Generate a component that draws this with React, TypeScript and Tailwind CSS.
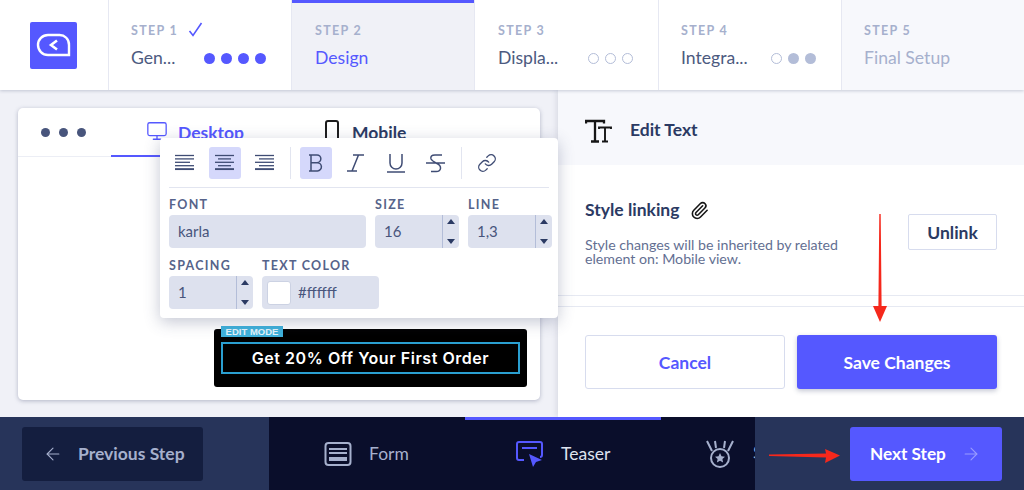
import React from "react";
import { Monitor, Paperclip, Link as LinkIcon, ArrowLeft, ArrowRight } from "lucide-react";

const Dot = ({ kind }: { kind: "blue" | "gray" | "empty" }) => (
  <span
    className={
      kind === "blue"
        ? "w-[11px] h-[11px] rounded-full bg-[#5558ff]"
        : kind === "gray"
        ? "w-[11px] h-[11px] rounded-full bg-[#b3bdd8]"
        : "w-[11px] h-[11px] rounded-full border border-[#b3bdd8]"
    }
  />
);

function Step({
  n, title, dots, cls, titleCls, check, w,
}: {
  n: number; title: string; dots?: ("blue" | "gray" | "empty")[]; cls: string; titleCls: string; check?: boolean; w: string;
}) {
  return (
    <div className={`${w} h-[90px] pr-[25px] pt-[23px] ${cls}`}>
      <div className="flex items-center h-4 text-[12.5px] font-bold tracking-[1.3px] text-[#a6b0cd]">
        STEP {n}
        {check && (
          <svg className="ml-[10px] -mt-[3px]" width="15" height="15" viewBox="0 0 15 15" fill="none">
            <path d="M1.5 9 L5 13.5 L13.5 1" stroke="#5558ff" strokeWidth="1.6" />
          </svg>
        )}
      </div>
      <div className="flex items-center justify-between mt-[7px] h-6">
        <span className={`text-[17.6px] ${titleCls}`}>{title}</span>
        {dots && (
          <span className="flex gap-[6px]">
            {dots.map((d, i) => <Dot key={i} kind={d} />)}
          </span>
        )}
      </div>
    </div>
  );
}

const Bars = ({ lines }: { lines: [number, number][] }) => (
  <svg width="20" height="18" viewBox="0 0 20 18" fill="none" stroke="#3f4c74">
    {lines.map(([a, b], i) => <path key={i} d={`M${a} ${1.5 + i * 3.4} H${b}`} strokeWidth={i === lines.length - 1 ? 1.9 : 1.3} />)}
  </svg>
);

const ToolBtn = ({ active, children }: { active?: boolean; children: React.ReactNode }) => (
  <div className={`w-8 h-8 rounded-[3px] flex items-center justify-center ${active ? "bg-[#d5d8fb]" : ""}`}>{children}</div>
);

const Label = ({ children }: { children: React.ReactNode }) => (
  <div className="text-[12.5px] leading-[14px] font-bold tracking-[1.3px] text-[#56638a]">{children}</div>
);

const Spin = ({ value, w }: { value: string; w: string }) => (
  <div className={`${w} h-[33px] rounded-[4px] bg-[#dde1ee] flex text-[15px] text-[#48557c]`}>
    <div className="flex-1 flex items-center pl-[9px]">{value}</div>
    <div className="w-[17px] border-l border-[#b3bdd8] flex flex-col items-center justify-between py-[4px]">
      <span className="w-0 h-0 border-x-[4px] border-x-transparent border-b-[5px] border-b-[#2b3a63]" />
      <span className="w-0 h-0 border-x-[4px] border-x-transparent border-t-[5px] border-t-[#2b3a63]" />
    </div>
  </div>
);

export default function App() {
  return (
    <div className="relative w-[1024px] h-[490px] overflow-hidden bg-[#f0f1f7] font-['Lato','Noto_Sans',sans-serif]">
      {/* Steps header */}
      <div className="flex h-[90px] shadow-[0_1px_3px_rgba(60,70,110,0.25)] relative gap-[1px] bg-[#e6e8f2]">
        <div className="w-[108px] bg-white flex items-center justify-center">
          <div className="w-[47px] h-[47px] rounded-[2px] bg-[#5558ff] flex items-center justify-center mr-[1px]">
            <svg width="35" height="24" viewBox="0 0 35 24" fill="none">
              <path d="M12 2 H23 A9.5 9.5 0 0 1 33 12 V22 H12 A10 10 0 0 1 12 2 Z" stroke="#fff" strokeWidth="2.4" />
              <path d="M21 7.5 L15 12 L21 16.5" stroke="#fff" strokeWidth="2.6" />
            </svg>
          </div>
        </div>
        <Step w="w-[182px] pl-[22px]" n={1} title="Gen..." check titleCls="text-[#4c5a80]" cls="bg-white" dots={["blue", "blue", "blue", "blue"]} />
        <div className="relative">
          <div className="absolute top-0 left-0 right-0 h-[3px] bg-[#5558ff]" />
          <Step w="w-[182px] pl-[23px]" n={2} title="Design" titleCls="text-[#5558ff]" cls="bg-[#f0f1f7]" />
        </div>
        <Step w="w-[183px] pl-[23px]" n={3} title="Displa..." titleCls="text-[#4c5a80]" cls="bg-white" dots={["empty", "empty", "empty"]} />
        <Step w="w-[182px] pl-[22px]" n={4} title="Integra..." titleCls="text-[#4c5a80]" cls="bg-white" dots={["empty", "gray", "gray"]} />
        <Step w="flex-1 pl-[22px]" n={5} title="Final Setup" titleCls="text-[#a6b0cd]" cls="bg-[#f7f8fc]" />
      </div>

      {/* Body */}
      <div className="flex h-[327px]">
        <div className="relative w-[558px] pt-[18px] pl-[18px] pr-[18px]">
          <div className="relative h-[292px] bg-white rounded-[5px] shadow-[0_1px_4px_rgba(60,70,110,0.35)]">
            <div className="flex h-[49px] border-b border-[#eceef5]">
              <div className="w-[93px] flex items-center pl-[23px] gap-[9px]">
                <span className="w-[9px] h-[9px] rounded-full bg-[#48557c]" />
                <span className="w-[9px] h-[9px] rounded-full bg-[#48557c]" />
                <span className="w-[9px] h-[9px] rounded-full bg-[#48557c]" />
              </div>
              <div className="w-[160px] h-[49px] border-b-2 border-[#5558ff] flex items-center pl-[35px] gap-[10px]">
                <Monitor size={22} strokeWidth={1.4} className="text-[#5558ff] -mt-[1px]" />
                <span className="text-[17.5px] font-bold text-[#5558ff] mt-[3px]">Desktop</span>
              </div>
              <div className="flex items-center pl-[54px] gap-[13px]">
                <span className="w-[14px] h-[22px] rounded-[3px] border-2 border-[#1c1c1c] -mt-[2px]" />
                <span className="text-[17.5px] font-bold text-[#2b3a63] mt-[3px]">Mobile</span>
              </div>
            </div>
            <div className="flex justify-end pr-[13px] pt-[172px]">
              <div className="relative w-[313px] h-[58px] bg-black rounded-[3px] p-[7px] pt-[13px]">
                <div className="absolute left-[7px] -top-[3px] w-[62px] h-[11px] text-center bg-[#3fb2dc] text-[#e4f5fb] text-[9.5px] leading-[11px] font-bold font-['Liberation_Sans',sans-serif]">
                  EDIT MODE
                </div>
                <div className="h-[32px] border-2 border-[#2a9fd0] flex items-center justify-center text-white text-[16px] font-semibold tracking-[0.55px] font-['Inter',sans-serif]">
                  Get 20% Off Your First Order
                </div>
              </div>
            </div>
          </div>

          {/* Formatting popup */}
          <div className="absolute z-10 left-[160px] top-[48px] w-[398px] h-[180px] bg-white rounded-[4px] shadow-[0_4px_16px_rgba(60,70,110,0.3)] px-[9px] pt-[9px]">
            <div className="flex items-center gap-2 h-8">
              <ToolBtn><Bars lines={[[0, 19], [0, 19], [0, 15], [0, 19], [0, 19]]} /></ToolBtn>
              <ToolBtn active><Bars lines={[[0, 19], [3, 16], [0, 19], [3, 16], [0, 19]]} /></ToolBtn>
              <ToolBtn><Bars lines={[[0, 19], [4, 19], [0, 19], [4, 19], [0, 19]]} /></ToolBtn>
              <div className="w-px h-8 bg-[#e2e5f0] mx-[1px]" />
              <ToolBtn active>
                <svg width="16" height="18" viewBox="0 0 16 18" fill="none" stroke="#3f4c74" strokeWidth="1.5">
                  <path d="M1 1 H9 A3.8 3.8 0 0 1 9 8.7 H2.5 M9 8.7 A4 4 0 0 1 9.5 17 H1 M3 1 V17" />
                </svg>
              </ToolBtn>
              <ToolBtn>
                <svg width="20" height="18" viewBox="0 0 20 18" fill="none" stroke="#3f4c74" strokeWidth="1.5">
                  <path d="M7 1 H18 M12.5 1 L6 17 M1 17 H11" />
                </svg>
              </ToolBtn>
              <ToolBtn>
                <svg width="20" height="20" viewBox="0 0 20 20" fill="none" stroke="#3f4c74" strokeWidth="1.5">
                  <path d="M4 1 V10 A6 6 0 0 0 16 10 V1 M1 19 H19" />
                </svg>
              </ToolBtn>
              <ToolBtn>
                <svg width="20" height="20" viewBox="0 0 20 20" fill="none" stroke="#3f4c74" strokeWidth="1.5">
                  <path d="M16 2 H9 Q4 2 5 6 Q6 8 10 10 Q15 12 14.5 15.5 Q14 19 9 18.5 H5 M0 10 H19" />
                </svg>
              </ToolBtn>
              <div className="w-px h-8 bg-[#e2e5f0] mx-[1px]" />
              <ToolBtn><LinkIcon size={20} strokeWidth={1.6} className="text-[#3f4c74]" /></ToolBtn>
            </div>
            <div className="h-px bg-[#e2e5f0] mt-[8px] w-[380px]" />
            <div className="flex gap-[9px] mt-[10px]">
              <div>
                <Label>FONT</Label>
                <div className="w-[197px] h-[33px] mt-[3px] rounded-[4px] bg-[#dde1ee] flex items-center pl-[9px] text-[15px] text-[#48557c]">karla</div>
              </div>
              <div>
                <Label>SIZE</Label>
                <div className="mt-[3px]"><Spin value="16" w="w-[84px]" /></div>
              </div>
              <div>
                <Label>LINE</Label>
                <div className="mt-[3px]"><Spin value="1,3" w="w-[84px]" /></div>
              </div>
            </div>
            <div className="flex gap-[9px] mt-[11px]">
              <div>
                <Label>SPACING</Label>
                <div className="mt-[3px]"><Spin value="1" w="w-[84px]" /></div>
              </div>
              <div>
                <Label>TEXT COLOR</Label>
                <div className="w-[117px] h-[33px] mt-[3px] rounded-[4px] bg-[#dde1ee] flex items-center pl-[5px] gap-[7px] text-[15px] text-[#48557c]">
                  <span className="w-6 h-6 bg-white rounded-[3px] border border-[#ccd2e3]" />
                  #ffffff
                </div>
              </div>
            </div>
          </div>
        </div>

        {/* Right panel */}
        <div className="flex-1 bg-white flex flex-col shadow-[-2px_0_5px_rgba(60,70,110,0.12)]">
          <div className="h-[75px] bg-[#f7f8fc] flex items-center pl-[27px] pt-[6px] gap-[18px]">
            <svg width="27" height="24" viewBox="0 0 27 24" fill="none" stroke="#161616" strokeWidth="2.3">
              <path d="M1 4.5 V2 H19 V4.5 M10 2 V22 M6 22.5 H14" />
              <path d="M14 10 V8.5 H26 V10 M20 8.5 V22 M17 22.5 H23" strokeWidth="1.9" />
            </svg>
            <span className="text-[17.5px] font-bold text-[#2b3a63]">Edit Text</span>
          </div>
          <div className="relative h-[131px] pl-[27px] pr-[27px] border-b border-[#e6e9f2]">
            <div className="flex items-center gap-[11px] pt-[35px] text-[17.5px] leading-[20px] font-bold text-[#2b3a63]">
              Style linking
              <Paperclip size={19} strokeWidth={2} className="text-[#161616]" />
            </div>
            <p className="mt-[18px] w-[270px] text-[14.2px] leading-[14px] text-[#636f92]">
              Style changes will be inherited by related element on: Mobile view.
            </p>
            <button className="absolute right-[27px] top-[49px] w-[89px] h-[36px] pt-[2px] bg-white rounded-[2px] border border-[#d7dcee] text-[17.5px] font-bold text-[#2b3a63]">
              Unlink
            </button>
          </div>
          <div className="border-t border-[#e6e9f2] mt-[10px] flex gap-[12px] pl-[27px] pt-[28px]">
            <button className="w-[200px] h-[54px] pt-[2px] bg-white rounded-[3px] border border-[#d7dcee] text-[17.5px] font-bold text-[#5558ff]">
              Cancel
            </button>
            <button className="w-[200px] h-[54px] pt-[2px] bg-[#5558ff] rounded-[3px] text-[17.5px] font-bold text-white shadow-[0_2px_5px_rgba(60,70,110,0.3)]">
              Save Changes
            </button>
          </div>
        </div>
      </div>

      {/* Bottom bar */}
      <div className="relative flex h-[73px] bg-[#27345a]">
        <div className="w-[269px] pl-[22px] pt-[10px]">
          <div className="w-[181px] h-[54px] rounded-[3px] bg-[#141e3f] flex items-center pl-[21px] gap-[15px] text-[17.5px] font-bold text-[#a6b0cd]">
            <ArrowLeft size={20} strokeWidth={1.3} />
            Previous Step
          </div>
        </div>
        <div className="w-[486px] bg-[#0a0e2b] flex overflow-hidden">
          <div className="w-[196px] shrink-0 flex items-center pl-[55px] gap-[17px] text-[17.5px] text-[#a6b0cd]">
            <svg width="28" height="26" viewBox="0 0 28 26" fill="none" stroke="#a6b0cd" strokeWidth="2">
              <rect x="1.5" y="2" width="25" height="22" rx="3" />
              <path d="M5 8 H23 M5 12 H23" />
              <rect x="5" y="16" width="18" height="4" fill="#a6b0cd" stroke="none" />
            </svg>
            <span className="mt-[2px]">Form</span>
          </div>
          <div className="w-[196px] shrink-0 flex items-center pl-[51px] gap-[17px] text-[17.5px] text-[#dfe3ef] border-t-[3px] border-[#5558ff] pb-[3px]">
            <svg width="28" height="28" viewBox="0 0 28 28" fill="none">
              <path d="M8 19 H3 A2 2 0 0 1 1 17 V3 A2 2 0 0 1 3 1 H24 A2 2 0 0 1 26 3 V14 A2 2 0 0 1 24 16" stroke="#5558ff" strokeWidth="2" transform="translate(0,1)" />
              <path d="M6 8 H21" stroke="#5558ff" strokeWidth="2" />
              <path d="M13 14 L26 20 L20 22 L17 27 Z" fill="#5558ff" />
            </svg>
            <span className="mt-[2px]">Teaser</span>
          </div>
          <div className="shrink-0 flex items-center pl-[45px] gap-[19px] text-[17.5px] text-[#a6b0cd]">
            <svg width="28" height="28" viewBox="0 0 28 28" fill="none" stroke="#a6b0cd" strokeWidth="2">
              <circle cx="14" cy="18" r="9" />
              <path d="M1 1 L6 11 M9 1 L10 8 M19 1 L18 8 M27 1 L22 11" />
              <path d="M14 13 L15.5 16.3 L19 16.7 L16.4 19 L17.1 22.5 L14 20.7 L10.9 22.5 L11.6 19 L9 16.7 L12.5 16.3 Z" fill="#a6b0cd" stroke="none" />
            </svg>
            Settings
          </div>
        </div>
        <div className="flex-1 pl-[95px] pt-[10px]">
          <div className="w-[152px] h-[54px] rounded-[3px] bg-[#5558ff] flex items-center pl-[20px] gap-[15px] text-[17.2px] font-bold text-white">
            Next Step
            <ArrowRight size={20} strokeWidth={1.3} className="text-[#9a9cff]" />
          </div>
        </div>
      </div>

      {/* Annotation arrows */}
      <svg className="absolute left-[870px] top-[212px] z-20" width="20" height="112" viewBox="0 0 20 112" fill="#f5281c">
        <path d="M9.3 2 H10.7 L11.6 94 H17 L10 110 L3 94 H8.4 Z" />
      </svg>
      <svg className="absolute left-[768px] top-[446px] z-20" width="74" height="18" viewBox="0 0 74 18" fill="#f5281c">
        <path d="M1 8.5 L58 7.5 L57 3 L72 9.5 L57 17 L58 11.5 L1 10 Z" />
      </svg>
    </div>
  );
}
